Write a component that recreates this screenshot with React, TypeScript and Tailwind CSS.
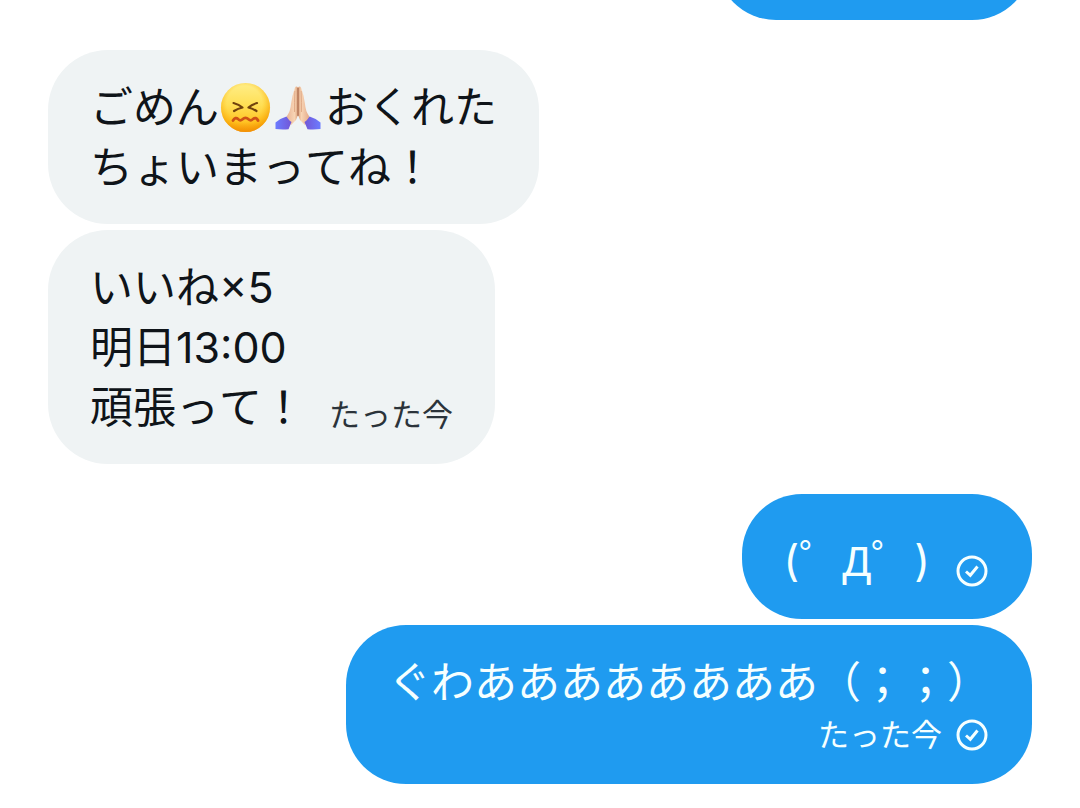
import React from 'react';
import { twMerge } from 'tailwind-merge';

interface BubbleProps {
  mine?: boolean;
  className?: string;
  children?: React.ReactNode;
}

const Bubble: React.FC<BubbleProps> = ({ mine, className, children }) => {
  return (
    <div
      className={twMerge(
        'w-fit rounded-[60px] px-[42px] py-[27px]',
        mine ? 'self-end bg-[#1f9bf0] text-[#f5ffff]' : 'self-start bg-[#eff3f4] text-[#0f1419]',
        className
      )}
    >
      {children}
    </div>
  );
};

const ConfoundedFace = () => (
  <svg viewBox="0 0 53 60" className="inline-block h-[60px] w-[53px] align-top" role="img" aria-label="confounded face">
    <defs>
      <linearGradient id="face" x1="0" y1="0" x2="0" y2="1">
        <stop offset="0" stopColor="#ffee88" />
        <stop offset="0.45" stopColor="#ffdf55" />
        <stop offset="0.8" stopColor="#ffc425" />
        <stop offset="1" stopColor="#f58a12" />
      </linearGradient>
      <radialGradient id="rim" cx="0.48" cy="0.42" r="0.6">
        <stop offset="0.6" stopColor="#ffb400" stopOpacity="0" />
        <stop offset="1" stopColor="#f09000" stopOpacity="0.85" />
      </radialGradient>
    </defs>
    <circle cx="26.5" cy="30.5" r="24.5" fill="url(#face)" />
    <circle cx="26.5" cy="30.5" r="24.5" fill="url(#rim)" />
    <g fill="none" stroke="#70420d" strokeWidth="2.2" strokeLinecap="round" strokeLinejoin="round">
      <path d="M14.5 26 Q20 27.500 23.500 30.5 Q19 31.500 15 34" />
      <path d="M38 26 Q32.500 27.500 29.500 30.5 Q33.500 31.500 37.500 34" />
    </g>
    <path
      d="M14 43.500 Q16.500 39.500 19 42 Q21 44.500 23.500 42.300 Q26.500 39.500 29.500 42.300 Q32 44.500 34 42 Q37 39.500 39 43.500"
      fill="none"
      stroke="#cf5216"
      strokeWidth="2.8"
      strokeLinecap="round"
    />
  </svg>
);

const FoldedHands = () => (
  <svg viewBox="0 0 53 60" className="inline-block h-[60px] w-[53px] align-top" role="img" aria-label="folded hands">
    <defs>
      <linearGradient id="skin" x1="0" y1="0" x2="1" y2="0">
        <stop offset="0" stopColor="#e9b293" />
        <stop offset="0.36" stopColor="#f8d5b5" />
        <stop offset="0.5" stopColor="#d99d78" />
        <stop offset="0.64" stopColor="#f8d5b5" />
        <stop offset="1" stopColor="#e3a684" />
      </linearGradient>
      <linearGradient id="sleeveL" x1="0" y1="0" x2="1" y2="0">
        <stop offset="0" stopColor="#6b7cff" />
        <stop offset="1" stopColor="#7256d6" />
      </linearGradient>
      <linearGradient id="sleeveR" x1="1" y1="0" x2="0" y2="0">
        <stop offset="0" stopColor="#6b7cff" />
        <stop offset="1" stopColor="#7256d6" />
      </linearGradient>
    </defs>
    <path
      d="M26 10.500 Q24 8.500 22.800 11 Q20 19 19 27 Q18.500 34 15 39 L14 42 L19 48 L24 43 L26 38 L28 43 L33 48 L38 42 L37 39 Q33.500 34 33 27 Q32 19 29.200 11 Q28 8.500 26 10.500Z"
      fill="url(#skin)"
    />
    <path d="M26 11 V39" stroke="#9c5d42" strokeWidth="0.9" />
    <path d="M22.800 14 Q22.300 26 22.500 35 M29.200 14 Q29.700 26 29.500 35" stroke="#dca27f" strokeWidth="0.8" fill="none" />
    <path d="M3.500 52 V45.500 Q9 41 14.500 39.500 Q17.500 44 19.500 45 L16.500 52.300 Q9 52.800 3.500 52Z" fill="url(#sleeveL)" />
    <path d="M48.500 52 V45.500 Q43 41 37.500 39.500 Q34.500 44 32.500 45 L35.500 52.300 Q43 52.800 48.500 52Z" fill="url(#sleeveR)" />
  </svg>
);

const SentIcon = () => (
  <svg viewBox="0 0 36 36" className="size-9 shrink-0" fill="none" stroke="currentColor" role="img" aria-label="sent">
    <circle cx="18" cy="18" r="14" strokeWidth="3" />
    <path d="M12 18.500 L16.300 22.300 L23.500 13.500" strokeWidth="3" />
  </svg>
);

const App: React.FC = () => {
  return (
    <main className="min-h-screen bg-white px-12 font-[Inter,'Noto_Sans_CJK_JP',sans-serif] text-[43px] leading-[60px] whitespace-nowrap [font-kerning:none]">
      {/* tail of the previous message */}
      <div className="flex h-5 items-end justify-end overflow-hidden">
        <Bubble mine className="h-[125px] w-[316px] shrink-0" />
      </div>

      <div className="mt-[30px] flex flex-col gap-[6px]">
        <Bubble>
          <p>
            ごめん
            <ConfoundedFace />
            <FoldedHands />
            おくれた
          </p>
          <p>ちょいまってね！</p>
        </Bubble>
        <Bubble>
          <p>いいね×5</p>
          <p>明日13:00</p>
          <div className="flex items-end gap-6">
            <p>頑張って！</p>
            <time className="text-[31px] leading-[45px] text-[#2b333a]">たった今</time>
          </div>
        </Bubble>
      </div>

      <div className="mt-[30px] flex flex-col gap-[6px] pb-6">
        <Bubble mine className="flex items-end gap-6 pt-9 pb-7">
          <p>
            (゜<span className="font-['Liberation_Sans',sans-serif]">Д</span>゜)
          </p>
          <div className="flex h-10 items-center">
            <SentIcon />
          </div>
        </Bubble>
        <Bubble mine>
          <p>ぐわああああああああ（；；）</p>
          <div className="flex items-center justify-end gap-3 text-[31px] leading-[45px]">
            <time>たった今</time>
            <SentIcon />
          </div>
        </Bubble>
      </div>
    </main>
  );
};

export default App;
